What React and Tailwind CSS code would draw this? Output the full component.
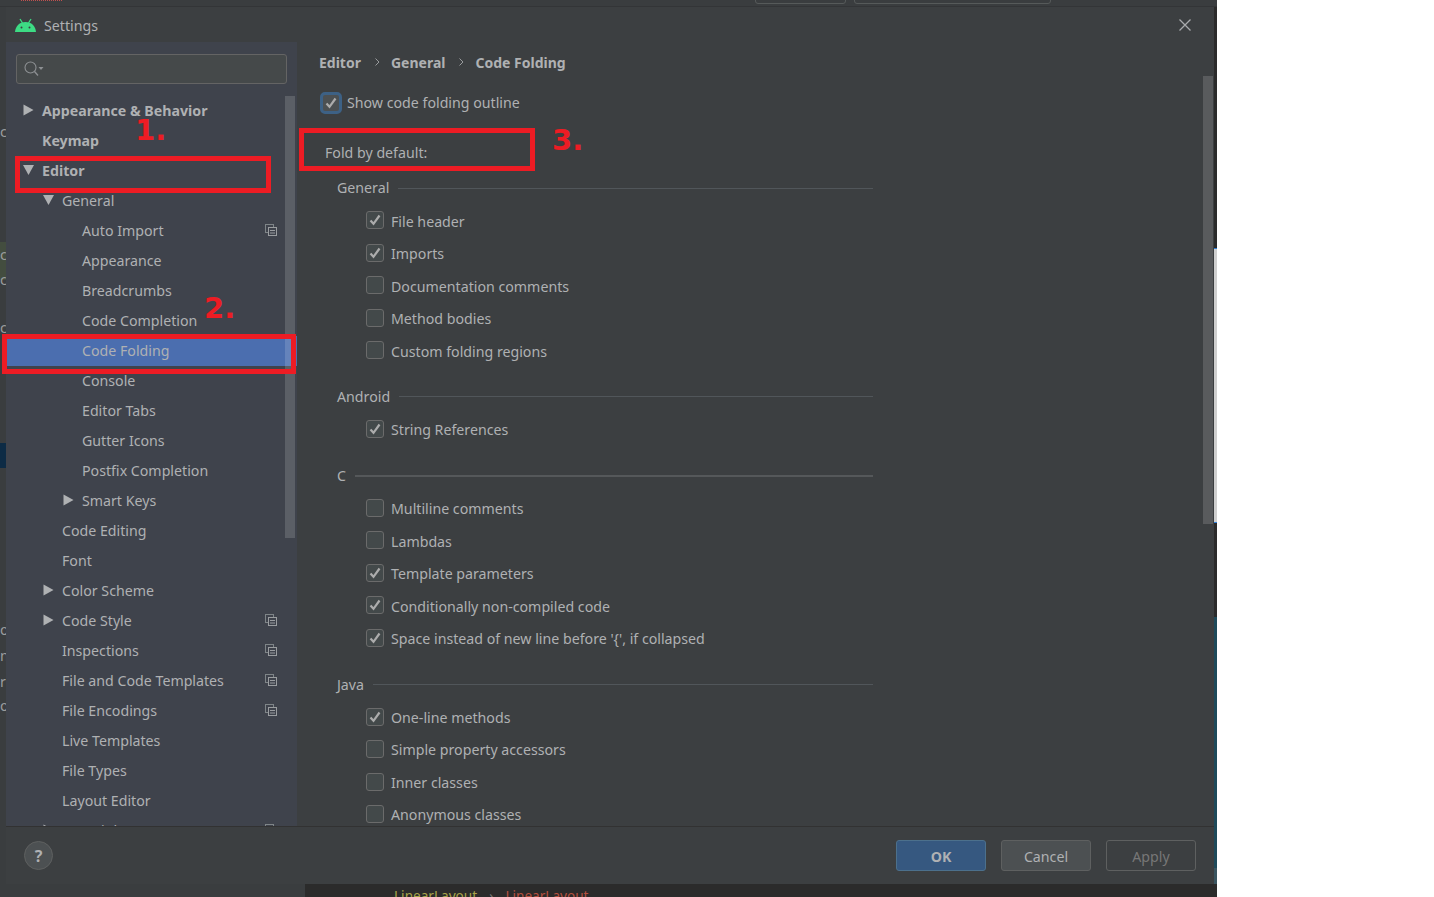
const font = "font-['Noto_Sans','Open_Sans',sans-serif]";

// sidebar rows: label, indent level, arrow (right/down), copy icon, bold
const treeRows = [
  { label: 'Appearance & Behavior', level: 0, arrow: 'right', bold: true },
  { label: 'Keymap', level: 0, bold: true },
  { label: 'Editor', level: 0, arrow: 'down', bold: true },
  { label: 'General', level: 1, arrow: 'down' },
  { label: 'Auto Import', level: 2, copy: true },
  { label: 'Appearance', level: 2 },
  { label: 'Breadcrumbs', level: 2 },
  { label: 'Code Completion', level: 2 },
  { label: 'Code Folding', level: 2, selected: true },
  { label: 'Console', level: 2 },
  { label: 'Editor Tabs', level: 2 },
  { label: 'Gutter Icons', level: 2 },
  { label: 'Postfix Completion', level: 2 },
  { label: 'Smart Keys', level: 2, arrow: 'right' },
  { label: 'Code Editing', level: 1 },
  { label: 'Font', level: 1 },
  { label: 'Color Scheme', level: 1, arrow: 'right' },
  { label: 'Code Style', level: 1, arrow: 'right', copy: true },
  { label: 'Inspections', level: 1, copy: true },
  { label: 'File and Code Templates', level: 1, copy: true },
  { label: 'File Encodings', level: 1, copy: true },
  { label: 'Live Templates', level: 1 },
  { label: 'File Types', level: 1 },
  { label: 'Layout Editor', level: 1 },
  { label: 'Copyright', level: 1, arrow: 'right', copy: true },
];

const groups = [
  {
    title: 'General',
    items: [
      ['File header', true],
      ['Imports', true],
      ['Documentation comments', false],
      ['Method bodies', false],
      ['Custom folding regions', false],
    ],
  },
  { title: 'Android', items: [['String References', true]] },
  {
    title: 'C',
    thick: true,
    items: [
      ['Multiline comments', false],
      ['Lambdas', false],
      ['Template parameters', true],
      ['Conditionally non-compiled code', true],
      ["Space instead of new line before '{', if collapsed", true],
    ],
  },
  {
    title: 'Java',
    items: [
      ['One-line methods', true],
      ['Simple property accessors', false],
      ['Inner classes', false],
      ['Anonymous classes', false],
    ],
  },
];

// bits of the IDE window that peek out left of the dialog
const leftScraps = [
  ['c', 'top-[122px]'],
  ['c', 'top-[245px]'],
  ['c', 'top-[270px]'],
  ['c', 'top-[318px]'],
  ['o', 'top-[620px]'],
  ['nl', 'top-[646px]'],
  ['r', 'top-[672px]'],
  ['o', 'top-[696px]'],
];

const Arrow = ({ dir }) => (
  <svg width="11" height="12" viewBox="0 0 11 12" className="shrink-0">
    {dir === 'right' ? <path d="M0.5 0.5 L10.5 6 L0.5 11.5 Z" fill="#afb1b3" /> : <path d="M0 1 L11 1 L5.5 11 Z" fill="#afb1b3" />}
  </svg>
);

const CopyIcon = () => (
  <svg width="12" height="12" viewBox="0 0 12 12" className="shrink-0 mb-[2px]">
    <rect x="0.5" y="0.5" width="8" height="8" fill="none" stroke="#7f8588" />
    <rect x="3.5" y="3.5" width="8" height="8" fill="#3f434c" stroke="#9a9da0" />
    <path d="M5 6.5 H10 M5 9 H10" stroke="#9a9da0" />
  </svg>
);

const Tick = () => (
  <svg width="12" height="12" viewBox="0 0 12 12">
    <path d="M1.5 6.5 L4.5 9.8 L10.5 1.5" fill="none" stroke="#acacac" strokeWidth="2.2" />
  </svg>
);

const Check = ({ checked }) => (
  <span className="flex items-center justify-center shrink-0 rounded-[3px] border w-[18px] h-[18px] mb-[2px] bg-[#43494a] border-[#6b6b6b]">
    {checked && <Tick />}
  </span>
);

const TreeRow = ({ row }) => {
  const pad = ['pl-[36px]', 'pl-[56px]', 'pl-[76px]'][row.level];
  const arrowPos = ['left-[17px]', 'left-[37px]', 'left-[57px]'][row.level];
  return (
    <div
      className={`relative h-[30px] shrink-0 flex items-center ${pad} pr-[20px] justify-between ${
        row.selected ? 'bg-[#4b6eaf]' : ''
      } ${row.bold ? 'font-bold' : ''}`}
    >
      {row.arrow && (
        <span className={`absolute top-[8px] ${arrowPos}`}>
          <Arrow dir={row.arrow} />
        </span>
      )}
      <span>{row.label}</span>
      {row.copy && <CopyIcon />}
    </div>
  );
};

const Group = ({ group }) => (
  <div className="mb-[17.3px]">
    <div className="flex items-center gap-[9px] h-[24px] pl-[18px] w-[554px]">
      <span>{group.title}</span>
      <span className={`flex-1 ${group.thick ? 'h-[2px] bg-[#55585a]' : 'h-px bg-[#51565a]'}`} />
    </div>
    <div className="flex flex-col pl-[47px] pt-[5px]">
      {group.items.map(([label, checked]) => (
        <div key={label} className="flex items-center gap-[7px] h-[32.5px]">
          <Check checked={checked} />
          <span>{label}</span>
        </div>
      ))}
    </div>
  </div>
);

const Chevron = () => (
  <svg width="5" height="8" viewBox="0 0 5 8" className="ml-[14px] mr-[11px]">
    <path d="M0.5 0.5 L4 4 L0.5 7.5" fill="none" stroke="#9a9c9e" />
  </svg>
);

export default function App() {
  return (
    <div className={`relative w-[1434px] h-[897px] overflow-hidden bg-white text-[14.2px] text-[#afb1b3] ${font}`}>
      {/* the IDE behind the dialog */}
      <div className="relative w-[1217px] h-[897px] bg-[#3a3d3f] flex flex-col overflow-hidden">
        <div className="h-[7px] shrink-0 border-b border-[#333537] relative">
          <div className="absolute left-[21px] top-0 w-[41px] border-t border-dotted border-[#c0504f]" />
          <div className="absolute left-[755px] -top-[4px] w-[91px] h-[8px] border border-[#565a5a] rounded-[3px]" />
          <div className="absolute left-[854px] -top-[4px] w-[197px] h-[8px] border border-[#565a5a] rounded-[3px]" />
        </div>
        <div className="flex-1" />
        <div className="h-[13px] shrink-0 ml-[305px] pl-[89px] flex gap-[12px] text-[13.6px] leading-[24px] bg-[#2b2b2b] text-[#a8a34a] overflow-hidden">
          <span>LinearLayout</span>
          <span className="text-[#777777]">›</span>
          <span className="text-[#b5503f]">LinearLayout</span>
        </div>

        {/* left edge */}
        <div className="absolute left-0 top-[242px] w-[6px] h-[38px] bg-[#434d3f]" />
        <div className="absolute left-0 top-[443px] w-[6px] h-[25px] bg-[#0d2b45]" />
        {leftScraps.map(([ch, top]) => (
          <span key={top} className={`absolute left-0 w-[6px] overflow-hidden leading-[20px] text-[#9a9c9e] ${top}`}>
            {ch}
          </span>
        ))}

        {/* right edge */}
        <div className="absolute left-[1214px] top-[7px] w-[3px] h-[241px] bg-[#2b2b2b]" />
        <div className="absolute left-[1214px] top-[248px] w-[3px] h-[275px] bg-[#cfcfcf] border-y border-[#2f7fd6]" />
        <div className="absolute left-[1214px] top-[523px] w-[3px] h-[94px] bg-[#2b2b2b]" />
        <div className="absolute left-[1214px] top-[617px] w-[3px] h-[251px] bg-[#1f4a5a]" />
        <div className="absolute left-[1214px] top-[868px] w-[3px] h-[16px] bg-[#3a5560]" />
      </div>

      {/* settings dialog */}
      <div className="absolute left-[6px] top-[7px] w-[1208px] h-[877px] bg-[#3c3f41] flex flex-col">
        <div className="h-[35px] shrink-0 flex items-center pl-[9px] pr-[23px]">
          <svg width="21" height="14" viewBox="0 0 21 14">
            <path d="M0 14 C0.5 8 4.5 4 10.5 4 C16.5 4 20.5 8 21 14 Z" fill="#3ddc84" />
            <path d="M5 1 L7.5 5 M16 1 L13.5 5" stroke="#3ddc84" strokeWidth="1.3" />
            <circle cx="6.5" cy="9.5" r="1" fill="#3c3f41" />
            <circle cx="14.5" cy="9.5" r="1" fill="#3c3f41" />
          </svg>
          <span className="ml-[8px] flex-1 pt-[2px]">Settings</span>
          <svg width="12" height="12" viewBox="0 0 12 12">
            <path d="M0.5 0.5 L11.5 11.5 M11.5 0.5 L0.5 11.5" stroke="#a9abad" strokeWidth="1.3" />
          </svg>
        </div>

        <div className="flex-1 flex min-h-0">
          {/* sidebar */}
          <div className="w-[291px] shrink-0 bg-[#3f434c] flex flex-col relative overflow-hidden">
            <div className="mx-[10px] mt-[12px] h-[30px] shrink-0 bg-[#45494a] border border-[#646464] rounded-[3px] flex items-center pl-[7px]">
              <svg width="20" height="16" viewBox="0 0 20 16">
                <circle cx="6.5" cy="6.5" r="5.5" fill="none" stroke="#8d9093" strokeWidth="1.1" />
                <path d="M10.5 10.5 L14 14.5" stroke="#8d9093" strokeWidth="1.3" />
                <path d="M14.5 6 H19.5 L17 9 Z" fill="#8d9093" />
              </svg>
            </div>
            <div className="flex flex-col pt-[12px]">
              {treeRows.map((row) => (
                <TreeRow key={row.label} row={row} />
              ))}
            </div>
            <div className="absolute right-[2px] top-[54px] w-[10px] h-[442px] bg-[#ffffff]/15" />
          </div>

          {/* main panel */}
          <div className="flex-1 relative overflow-hidden pl-[22px] pt-[9px]">
            <div className="flex items-center h-[24px] pb-[2px] font-bold text-[14px]">
              <span>Editor</span>
              <Chevron />
              <span>General</span>
              <Chevron />
              <span>Code Folding</span>
            </div>
            <div className="flex items-center gap-[5px] h-[24px] mt-[16px] pl-[1px]">
              <span className="flex items-center justify-center shrink-0 w-[22px] h-[22px] rounded-[5px] border-[3px] border-[#3d6185] bg-[#4c5052]">
                <Tick />
              </span>
              <span>Show code folding outline</span>
            </div>
            <div className="h-[24px] mt-[26px] pl-[6px] flex items-center">Fold by default:</div>
            <div className="mt-[11px]">
              {groups.map((g) => (
                <Group key={g.title} group={g} />
              ))}
            </div>
            <div className="absolute right-[1px] top-[34px] w-[10px] h-[448px] bg-[#ffffff]/15" />
          </div>
        </div>

        {/* footer */}
        <div className="h-[58px] shrink-0 border-t border-[#323232] bg-[#3c3f41] flex items-center px-[18px]">
          <div className="w-[29px] h-[29px] rounded-full bg-[#4c5052] border border-[#5e6060] flex items-center justify-center font-bold text-[16px]">?</div>
          <div className="flex-1" />
          <button className="w-[90px] h-[31px] pt-[2px] rounded-[3px] bg-[#365880] border border-[#4c708c] font-bold mr-[15px]">OK</button>
          <button className="w-[90px] h-[31px] pt-[2px] rounded-[3px] bg-[#4c5052] border border-[#5e6060] mr-[15px]">Cancel</button>
          <button className="w-[90px] h-[31px] pt-[2px] rounded-[3px] border border-[#5e6060] text-[#777777]">Apply</button>
        </div>
      </div>

      {/* red annotations from the person who took the screenshot */}
      <div className="absolute left-[15px] top-[156px] w-[256px] h-[37px] border-[5px] border-[#ed1c24]" />
      <div className="absolute left-[2px] top-[334px] w-[294px] h-[40px] border-[5px] border-[#ed1c24]" />
      <div className="absolute left-[299px] top-[128px] w-[236px] h-[43px] border-[5px] border-[#ed1c24]" />
      <span className="absolute left-[135px] top-[112px] text-[29px] leading-[36px] font-bold text-[#ed1c24] font-['DejaVu_Sans',sans-serif]">1.</span>
      <span className="absolute left-[204px] top-[290px] text-[29px] leading-[36px] font-bold text-[#ed1c24] font-['DejaVu_Sans',sans-serif]">2.</span>
      <span className="absolute left-[552px] top-[122px] text-[29px] leading-[36px] font-bold text-[#ed1c24] font-['DejaVu_Sans',sans-serif]">3.</span>
    </div>
  );
}
